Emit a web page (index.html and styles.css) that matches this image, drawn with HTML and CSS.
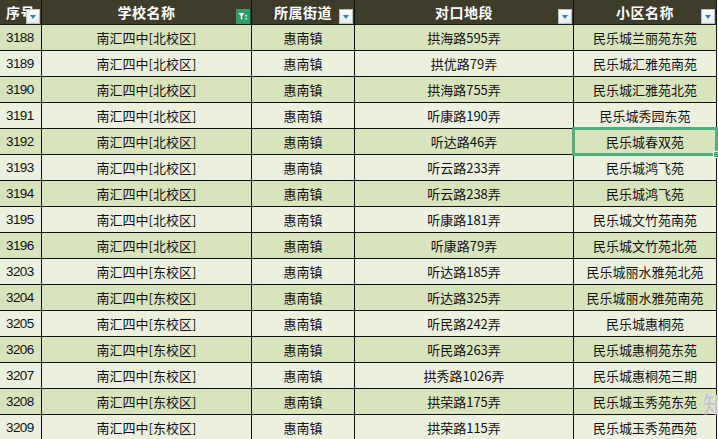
FILE: index.html
```html
<!DOCTYPE html>
<html lang="zh">
<head>
<meta charset="utf-8">
<link rel="stylesheet" href="styles.css">
</head>
<body>
<div class="sheet">
  <div class="grid">
    <div class="hd c1"><span class="ht">序号</span><span class="fb"><i></i></span></div>
    <div class="hd"><span class="ht">学校名称</span><span class="fb on"><svg width="10" height="10" viewBox="0 0 10 10"><path d="M0.5 1h6l-2.3 3v4l-1.4-1V4z" fill="#fff"/><rect x="7.5" y="3" width="1.5" height="1.5" fill="#fff"/><rect x="7.5" y="6" width="1.5" height="1.5" fill="#fff"/></svg></span></div>
    <div class="hd"><span class="ht">所属街道</span><span class="fb"><i></i></span></div>
    <div class="hd"><span class="ht">对口地段</span><span class="fb"><i></i></span></div>
    <div class="hd"><span class="ht">小区名称</span><span class="fb"><i></i></span></div>

    <div class="c c1 d">3188</div><div class="c d">南汇四中[北校区]</div><div class="c d">惠南镇</div><div class="c d">拱海路595弄</div><div class="c d">民乐城兰丽苑东苑</div>
    <div class="c c1 l">3189</div><div class="c l">南汇四中[北校区]</div><div class="c l">惠南镇</div><div class="c l">拱优路79弄</div><div class="c l">民乐城汇雅苑南苑</div>
    <div class="c c1 d">3190</div><div class="c d">南汇四中[北校区]</div><div class="c d">惠南镇</div><div class="c d">拱海路755弄</div><div class="c d">民乐城汇雅苑北苑</div>
    <div class="c c1 l">3191</div><div class="c l">南汇四中[北校区]</div><div class="c l">惠南镇</div><div class="c l">听康路190弄</div><div class="c l">民乐城秀园东苑</div>
    <div class="c c1 d">3192</div><div class="c d">南汇四中[北校区]</div><div class="c d">惠南镇</div><div class="c d">听达路46弄</div><div class="c d sel">民乐城春双苑<span class="selbox"></span><span class="handle"></span></div>
    <div class="c c1 l">3193</div><div class="c l">南汇四中[北校区]</div><div class="c l">惠南镇</div><div class="c l">听云路233弄</div><div class="c l">民乐城鸿飞苑</div>
    <div class="c c1 d">3194</div><div class="c d">南汇四中[北校区]</div><div class="c d">惠南镇</div><div class="c d">听云路238弄</div><div class="c d">民乐城鸿飞苑</div>
    <div class="c c1 l">3195</div><div class="c l">南汇四中[北校区]</div><div class="c l">惠南镇</div><div class="c l">听康路181弄</div><div class="c l">民乐城文竹苑南苑</div>
    <div class="c c1 d">3196</div><div class="c d">南汇四中[北校区]</div><div class="c d">惠南镇</div><div class="c d">听康路79弄</div><div class="c d">民乐城文竹苑北苑</div>
    <div class="c c1 l">3203</div><div class="c l">南汇四中[东校区]</div><div class="c l">惠南镇</div><div class="c l">听达路185弄</div><div class="c l">民乐城丽水雅苑北苑</div>
    <div class="c c1 d">3204</div><div class="c d">南汇四中[东校区]</div><div class="c d">惠南镇</div><div class="c d">听达路325弄</div><div class="c d">民乐城丽水雅苑南苑</div>
    <div class="c c1 l">3205</div><div class="c l">南汇四中[东校区]</div><div class="c l">惠南镇</div><div class="c l">听民路242弄</div><div class="c l">民乐城惠桐苑</div>
    <div class="c c1 d">3206</div><div class="c d">南汇四中[东校区]</div><div class="c d">惠南镇</div><div class="c d">听民路263弄</div><div class="c d">民乐城惠桐苑东苑</div>
    <div class="c c1 l">3207</div><div class="c l">南汇四中[东校区]</div><div class="c l">惠南镇</div><div class="c l">拱秀路1026弄</div><div class="c l">民乐城惠桐苑三期</div>
    <div class="c c1 d">3208</div><div class="c d">南汇四中[东校区]</div><div class="c d">惠南镇</div><div class="c d">拱荣路175弄</div><div class="c d">民乐城玉秀苑东苑</div>
    <div class="c c1 l">3209</div><div class="c l">南汇四中[东校区]</div><div class="c l">惠南镇</div><div class="c l">拱荣路115弄</div><div class="c l">民乐城玉秀苑西苑</div>
  </div>
  <span class="wm">知</span>
</div>
</body>
</html>
```

FILE: styles.css
```css
html, body {
  margin: 0;
  padding: 0;
  background: #ffffff;
  overflow: hidden;
}
.sheet {
  position: relative;
  width: 718px;
  height: 439px;
  overflow: hidden;
  font-family: "Noto Sans CJK SC", "Liberation Sans", sans-serif;
  font-size: 13px;
  color: #111;
}
.grid {
  display: grid;
  grid-template-columns: 42px 210px 103px 219px 143px;
  grid-auto-rows: 26px;
  grid-template-rows: 25px;
}
.hd, .c {
  box-sizing: border-box;
  border-right: 1px solid #111;
  border-bottom: 1px solid #111;
  display: flex;
  align-items: center;
  justify-content: center;
  white-space: nowrap;
  position: relative;
}
.hd {
  background: #3e3c2a;
  color: #fff;
  font-weight: bold;
  font-size: 14px;
  border-bottom-color: #1a1a12;
  padding-bottom: 1px;
}
.hd .ht {
  letter-spacing: 0.5px;
}
.hd.c1 {
  justify-content: flex-start;
  padding-left: 6px;
}
.fb {
  position: absolute;
  right: 1px;
  bottom: 0;
  width: 14px;
  height: 15px;
  box-sizing: border-box;
  background: linear-gradient(#ffffff, #e4eaee);
  border: 1px solid #b8c0c4;
  display: flex;
  align-items: center;
  justify-content: center;
}
.fb i {
  display: block;
  width: 0;
  height: 0;
  border-left: 3.5px solid transparent;
  border-right: 3.5px solid transparent;
  border-top: 4px solid #3b8096;
  margin-top: 1px;
}
.fb.on {
  background: #2f9d68;
  border-color: #2f9d68;
}
.c1.c {
  justify-content: flex-start;
  padding-left: 6px;
  font-family: "Liberation Sans", sans-serif;
  font-size: 13.5px;
  letter-spacing: -0.6px;
}
.d { background: #d8e4bc; }
.l { background: #ebf1de; }
.sel {
  z-index: 2;
}
.selbox {
  position: absolute;
  left: -2px;
  top: -2px;
  right: -2px;
  bottom: -2px;
  border: 3px solid #4cb27c;
}
.handle {
  position: absolute;
  right: -4px;
  bottom: -4px;
  width: 5px;
  height: 5px;
  background: #4cb27c;
  border: 1px solid #fff;
}
.wm {
  position: absolute;
  left: 703px;
  top: 386px;
  font-size: 22px;
  font-weight: bold;
  color: #c8c8c8;
  text-shadow: 0 0 2px #fff;
}
```
